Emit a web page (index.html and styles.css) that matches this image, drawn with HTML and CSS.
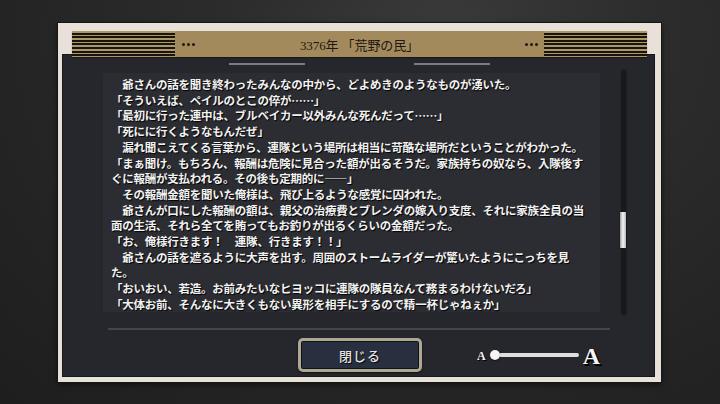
FILE: index.html
```html
<!DOCTYPE html>
<html lang="ja">
<head>
<meta charset="utf-8">
<title>3376年 「荒野の民」</title>
<link rel="stylesheet" href="styles.css">
</head>
<body>
<div class="frame">
  <div class="header">
    <div class="stripes"></div>
    <div class="dots"><span></span><span></span><span></span></div>
    <div class="title">3376年 「荒野の民」</div>
    <div class="dots right"><span></span><span></span><span></span></div>
    <div class="stripes"></div>
  </div>
  <div class="panel">
    <div class="deco"><span></span><span></span></div>
    <div class="body">
      <div class="text">
        <div class="line">　爺さんの話を聞き終わったみんなの中から、どよめきのようなものが湧いた。</div>
        <div class="line">「そういえば、ペイルのとこの倅が……」</div>
        <div class="line">「最初に行った連中は、ブルベイカー以外みんな死んだって……」</div>
        <div class="line">「死にに行くようなもんだぜ」</div>
        <div class="line">　漏れ聞こえてくる言葉から、連隊という場所は相当に苛酷な場所だということがわかった。</div>
        <div class="line">「まぁ聞け。もちろん、報酬は危険に見合った額が出るそうだ。家族持ちの奴なら、入隊後す</div>
        <div class="line">ぐに報酬が支払われる。その後も定期的に――」</div>
        <div class="line">　その報酬金額を聞いた俺様は、飛び上るような感覚に囚われた。</div>
        <div class="line">　爺さんが口にした報酬の額は、親父の治療費とブレンダの嫁入り支度、それに家族全員の当</div>
        <div class="line">面の生活、それら全てを賄ってもお釣りが出るくらいの金額だった。</div>
        <div class="line">「お、俺様行きます！　連隊、行きます！！」</div>
        <div class="line">　爺さんの話を遮るように大声を出す。周囲のストームライダーが驚いたようにこっちを見</div>
        <div class="line">た。</div>
        <div class="line">「おいおい、若造。お前みたいなヒヨッコに連隊の隊員なんて務まるわけないだろ」</div>
        <div class="line">「大体お前、そんなに大きくもない異形を相手にするので精一杯じゃねぇか」</div>
      </div>
      <div class="scroll"><div class="thumb"></div></div>
    </div>
    <div class="sep"></div>
    <div class="controls">
      <button class="close">閉じる</button>
      <div class="slider">
        <span class="a-small">A</span>
        <span class="knob"></span>
        <span class="track"></span>
        <span class="a-big">A</span>
      </div>
    </div>
  </div>
</div>
</body>
</html>
```
FILE: styles.css
```css
* { box-sizing: border-box; }
html, body {
  margin: 0;
  width: 720px;
  height: 404px;
  overflow: hidden;
}
body {
  padding-top: 23px;
  background: radial-gradient(ellipse at 62% 8%, #3a3a3a 0%, #2c2c2c 35%, #232323 75%, #1e1e1e 100%);
  font-family: "Liberation Serif", "Noto Sans CJK JP", serif;
}
.frame {
  margin-left: 58px;
  width: 603px;
  height: 359px;
  padding: 8px 6px 5px 4px;
  background: #e7e1d9;
  box-shadow: 0 0 0 1px #161616, 0 2px 6px rgba(0,0,0,0.6);
  display: flex;
  flex-direction: column;
}
.header {
  position: relative;
  z-index: 2;
  height: 26px;
  margin: 0 8px 0 10px;
  background: #a38a5d;
  display: flex;
  align-items: center;
  box-shadow: 0 1px 1px rgba(0,0,0,0.35);
}
.stripes {
  align-self: stretch;
  width: 103px;
  background: repeating-linear-gradient(to bottom, #b09660 0 1.7px, #171512 1.7px 3.6px);
}
.dots {
  display: flex;
  gap: 2px;
  margin: 0 6px 0 7px;
}
.dots span {
  width: 3px;
  height: 3px;
  border-radius: 50%;
  background: #1d1a14;
}
.title {
  flex: 1;
  text-align: center;
  font-size: 13px;
  color: #1c1811;
  letter-spacing: -0.1px;
  padding-top: 1px;
}
.panel {
  margin-top: -3px;
  height: 323px;
  background: #26272c;
  box-shadow: inset 0 0 0 1px #17181c;
  display: flex;
  flex-direction: column;
}
.deco {
  display: flex;
  justify-content: center;
  gap: 109px;
  margin-top: 9px;
  padding-left: 1px;
}
.deco span {
  width: 76px;
  height: 2px;
  background: #7b7c80;
}
.body {
  display: flex;
  align-items: flex-start;
  margin-top: 5px;
}
.text {
  margin-top: 3px;
  margin-left: 41px;
  width: 497px;
  height: 239px;
  overflow: hidden;
  background: #2c2d33;
  padding: 4px 0 0 8px;
  font-family: "Noto Sans CJK JP", sans-serif;
  font-weight: 700;
  font-size: 11.5px;
  letter-spacing: -0.24px;
  line-height: 15.7px;
  color: #f2f2f2;
  text-shadow: 1px 1px 1px #000;
}
.line { white-space: nowrap; }
.scroll {
  position: relative;
  margin-left: 21px;
  width: 4px;
  height: 245px;
  background: #18191c;
  box-shadow: 1px 0 2px rgba(0,0,0,0.5);
  border-radius: 2px;
}
.thumb {
  position: absolute;
  left: -1px;
  top: 142px;
  width: 6px;
  height: 36px;
  background: linear-gradient(to right, #9d9d9d, #f4f4f4 50%, #b5b5b5);
  box-shadow: 0 0 1px #000;
}
.sep {
  margin: 13px 45px 0 46px;
  height: 2px;
  background: #44454b;
}
.controls {
  display: flex;
  align-items: center;
  margin-top: 8px;
}
.close {
  margin-left: 236px;
  width: 124px;
  height: 34px;
  border: 3px solid #b0a792;
  border-radius: 5px;
  background: #283040;
  box-shadow: inset 0 0 0 1px #0f131a, 0 1px 2px rgba(0,0,0,0.6);
  color: #e4e4e4;
  font-family: "Noto Sans CJK JP", sans-serif;
  font-size: 13px;
  font-weight: 500;
  letter-spacing: 1px;
  padding: 0;
  text-shadow: 1px 1px 1px #000;
}
.slider {
  display: flex;
  align-items: center;
  margin-left: 55px;
}
.a-small {
  font-size: 12px;
  font-weight: 700;
  color: #f4f4f4;
  text-shadow: 1px 1px 0 #000;
  line-height: 1;
  padding-top: 2px;
}
.knob {
  width: 10px;
  height: 10px;
  border-radius: 50%;
  background: #f4f4f4;
  margin-left: 4px;
  box-shadow: 0 1px 1px rgba(0,0,0,0.5);
}
.track {
  width: 80px;
  height: 4px;
  border-radius: 2px;
  background: #dedede;
  margin-left: -1px;
}
.a-big {
  font-size: 24px;
  font-weight: 700;
  color: #f4f4f4;
  text-shadow: 1px 1px 0 #000, 2px 2px 0 #000;
  line-height: 1;
  margin-left: 4px;
  padding-top: 1px;
}
```
